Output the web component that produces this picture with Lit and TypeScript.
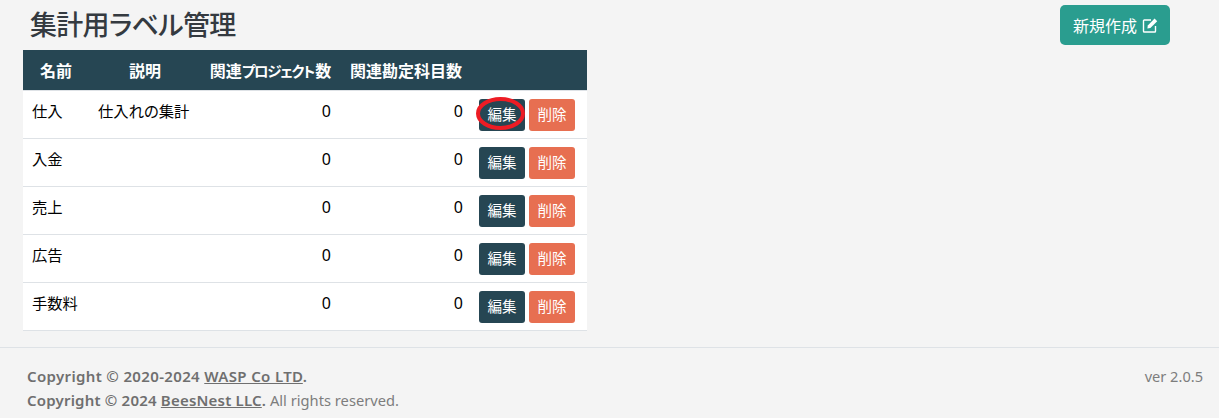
import { LitElement, html, css } from "lit";
import { customElement } from "lit/decorators.js";

const rows = [
  ["仕入", "仕入れの集計"],
  ["入金", ""],
  ["売上", ""],
  ["広告", ""],
  ["手数料", ""],
];

@customElement("app-root")
export class AppRoot extends LitElement {
  static styles = css`
    :host {
      display: block;
      width: 1219px;
      height: 418px;
      overflow: hidden;
      background: #f4f4f4;
      font-family: "Noto Sans", "Noto Sans CJK JP", sans-serif;
      font-feature-settings: "palt";
      color: #000;
    }
    .main {
      height: 347px;
      box-sizing: border-box;
    }
    .head {
      display: flex;
      justify-content: space-between;
      align-items: flex-start;
      height: 50px;
      padding: 5px 49px 0 30px;
      box-sizing: border-box;
    }
    h1 {
      margin: 0;
      font-size: 27px;
      letter-spacing: -0.7px;
      line-height: 39px;
      font-weight: 500;
      color: #343a40;
    }
    .new {
      display: flex;
      align-items: center;
      gap: 5px;
      width: 110px;
      height: 40px;
      padding-left: 13px;
      box-sizing: border-box;
      background: #2a9d8f;
      color: #fff;
      border-radius: 5px;
      font-size: 16px;
    }
    .new svg {
      display: block;
    }
    table {
      margin-left: 23px;
      width: 564px;
      table-layout: fixed;
      border-collapse: collapse;
      background: #fff;
      font-size: 16px;
    }
    th {
      background: #264653;
      color: #fff;
      height: 40px;
      padding: 0;
      font-size: 16px;
      font-weight: 700;
      text-align: center;
      border-bottom: 1px solid #dee2e6;
      box-sizing: border-box;
    }
    .kana {
      font-size: 14.5px;
      letter-spacing: -1.4px;
      margin-right: 1.4px;
    }
    td {
      height: 48px;
      padding: 0 9px 8px;
      border-bottom: 1px solid #dee2e6;
      box-sizing: border-box;
      font-size: 15.3px;
    }
    td.num {
      text-align: right;
      padding-right: 9px;
      padding-bottom: 7px;
      font-size: 16px;
      color: #000;
    }
    td.act {
      padding: 1px 0 0 7px;
    }
    .acts {
      display: flex;
      gap: 4px;
    }
    .btn {
      position: relative;
      display: flex;
      align-items: center;
      justify-content: center;
      width: 46px;
      height: 32px;
      padding-bottom: 2px;
      box-sizing: border-box;
      border-radius: 3px;
      color: #fff;
      font-size: 14.5px;
    }
    .edit {
      background: #264653;
    }
    .del {
      background: #e76f51;
    }
    .mark {
      position: absolute;
      left: -3px;
      top: -2px;
      pointer-events: none;
    }
    footer {
      height: 71px;
      border-top: 1px solid #dee2e6;
      box-sizing: border-box;
      padding: 16px 16px 0 27px;
      display: flex;
      justify-content: space-between;
      font-size: 14.7px;
      line-height: 24px;
      color: #7d7d7d;
    }
    .ver {
      font-size: 14.6px;
    }
    footer b {
      font-size: 15px;
      letter-spacing: 0.35px;
      font-weight: 600;
      color: #6f6f6f;
    }
    footer b.tight {
      letter-spacing: 0.2px;
    }
    footer a {
      color: #6f6f6f;
      text-decoration: underline;
    }
  `;

  render() {
    return html`
      <div class="main">
        <div class="head">
          <h1>集計用ラベル管理</h1>
          <div class="new">
            新規作成
            <svg width="17" height="16" viewBox="0 0 17 16" fill="none" stroke="#fff">
              <path d="M13.5 9v5.2a.8.8 0 0 1-.8.8H2.3a.8.8 0 0 1-.8-.8V3.8a.8.8 0 0 1 .8-.8H9" stroke-width="1.4" />
              <path d="M5.8 8.4 12.6 1.6l2.6 2.6-6.8 6.8-3 .4z" fill="#fff" stroke="none" />
            </svg>
          </div>
        </div>
        <table>
          <colgroup>
            <col style="width:66px" /><col style="width:112px" /><col style="width:139px" /><col style="width:132px" /><col style="width:115px" />
          </colgroup>
          <thead>
            <tr><th>名前</th><th>説明</th><th>関連<span class="kana">プロジェクト</span>数</th><th>関連勘定科目数</th><th></th></tr>
          </thead>
          <tbody>
            ${rows.map(
              (r, i) => html`<tr>
                <td>${r[0]}</td>
                <td>${r[1]}</td>
                <td class="num">0</td>
                <td class="num">0</td>
                <td class="act">
                  <div class="acts">
                    <div class="btn edit">
                      編集
                      ${i === 0
                        ? html`<svg class="mark" width="50" height="35" viewBox="0 0 50 35" fill="none">
                            <ellipse cx="24.5" cy="16.5" rx="22.5" ry="14.5" stroke="#ed1c24" stroke-width="4" />
                          </svg>`
                        : ""}
                    </div>
                    <div class="btn del">削除</div>
                  </div>
                </td>
              </tr>`
            )}
          </tbody>
        </table>
      </div>
      <footer>
        <div>
          <div><b>Copyright © 2020-2024 <a>WASP Co LTD</a>.</b></div>
          <div><b class="tight">Copyright © 2024 <a>BeesNest LLC</a>.</b> All rights reserved.</div>
        </div>
        <div class="ver">ver 2.0.5</div>
      </footer>
    `;
  }
}
